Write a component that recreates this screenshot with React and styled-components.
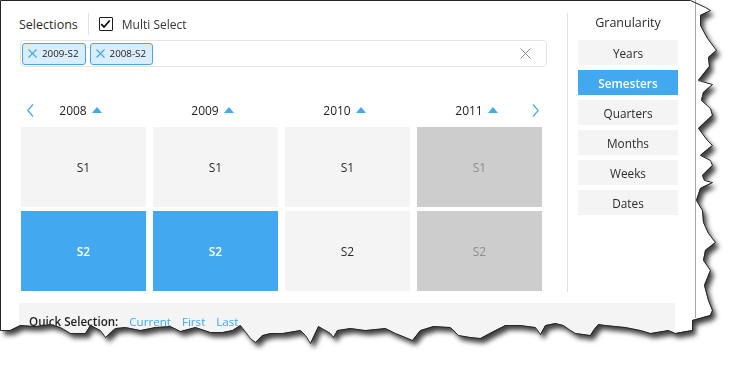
import React from "react";
import styled, { createGlobalStyle } from "styled-components";

const BLUE = "#42a8f0";

const EDGE = [
  [0, 0], [690, 0], [705, 7], [710, 10], [700, 15], [700, 25], [707, 38], [716, 50], [708, 57], [709, 66],
  [698, 80], [712, 84], [703, 92], [701, 100], [710, 108], [712, 115], [698, 128], [707, 140], [712, 145],
  [700, 155], [710, 160], [712, 165], [702, 175], [704, 180], [712, 182], [700, 188], [696, 200], [702, 210],
  [703, 222], [708, 233], [715, 242], [705, 250], [703, 260], [710, 270], [704, 285], [708, 300], [712, 310],
  [710, 315], [692, 320], [692, 330], [675, 333], [668, 330], [650, 333], [640, 330], [625, 327], [605, 325],
  [598, 324], [593, 330], [590, 335], [583, 334], [575, 333], [570, 330], [563, 325], [555, 323], [545, 325],
  [540, 334], [535, 327], [520, 325], [505, 325], [495, 330], [480, 338], [470, 337], [458, 335], [450, 327],
  [433, 326], [420, 330], [412, 340], [405, 337], [395, 333], [385, 328], [365, 330], [350, 328], [337, 330],
  [333, 337], [330, 333], [318, 326], [310, 343], [305, 335], [300, 330], [282, 333], [270, 333], [262, 335],
  [255, 342], [250, 338], [240, 325], [232, 330], [222, 332], [210, 332], [195, 327], [180, 331], [170, 326],
  [155, 327], [140, 330], [125, 327], [115, 328], [105, 337], [100, 330], [90, 325], [85, 333], [70, 333],
  [60, 327], [50, 324], [35, 326], [20, 325], [10, 330], [0, 330],
];
const CLIP = `polygon(${EDGE.map(([x, y]) => `${x}px ${y}px`).join(", ")})`;
const SVG_POINTS = EDGE.map(([x, y]) => `${x + 0.5},${y + 0.5}`).join(" ");

const Global = createGlobalStyle`
  html, body { margin: 0; padding: 0; background: #fff; }
  body { font-family: "Open Sans", "Noto Sans", sans-serif; }
  * { box-sizing: border-box; }
`;

const Stage = styled.div`
  position: relative;
  width: 738px;
  height: 366px;
  overflow: hidden;
  background: #fff;
`;

const Shadowed = styled.div`
  width: 738px;
  height: 366px;
  filter: drop-shadow(4px 5px 2.5px rgba(0, 0, 0, 0.75));
`;

const Paper = styled.div`
  width: 738px;
  height: 366px;
  background: #fff;
  clip-path: ${CLIP};
  display: flex;
  flex-direction: column;
  padding: 13px 0 0 20px;
  color: #2b2b2b;
  font-family: "Open Sans", "Noto Sans", sans-serif;
`;

const EdgeOverlay = styled.svg`
  position: absolute;
  left: 0;
  top: 0;
  pointer-events: none;
`;

const Main = styled.div`
  display: flex;
  height: 279px;
`;

const LeftCol = styled.div`
  width: 527px;
  display: flex;
  flex-direction: column;
`;

const VSep = styled.div`
  width: 1px;
  margin-left: 20px;
  background: #e2e2e2;
`;

const RightCol = styled.div`
  width: 100px;
  margin-left: 10px;
  display: flex;
  flex-direction: column;
`;

const Header = styled.div`
  height: 22px;
  display: flex;
  align-items: center;
`;

const Title = styled.span`
  font-size: 12.5px;
  color: #2b2b2b;
  margin-left: -1px;
`;

const Divider = styled.div`
  width: 1px;
  height: 22px;
  background: #e2e2e2;
  margin-left: 10px;
`;

const CheckBox = styled.span`
  width: 14px;
  height: 14px;
  margin-left: 10px;
  border: 1.5px solid #1e1e1e;
  border-radius: 1px;
  display: flex;
  align-items: center;
  justify-content: center;
  background: #fff;
`;

const CheckLabel = styled.span`
  margin-left: 9px;
  font-size: 12px;
  color: #333;
`;

const TagBox = styled.div`
  margin-top: 5px;
  height: 27px;
  border: 1px solid #e4e4e4;
  border-radius: 4px;
  padding: 0 15px 0 1px;
  display: flex;
  align-items: center;
  gap: 4px;
`;

const Tag = styled.span`
  height: 22px;
  display: flex;
  align-items: center;
  gap: 5px;
  padding: 0 6px 0 5px;
  background: #d9edfc;
  border: 1px solid ${BLUE};
  border-radius: 3px;
  font-size: 9.8px;
  color: #222;
`;

const Spacer = styled.div`
  flex: 1;
`;

const NavRow = styled.div`
  margin-top: 33px;
  margin-left: 1px;
  height: 20px;
  display: grid;
  grid-template-columns: repeat(4, 125px);
  column-gap: 7px;
`;

const YearHead = styled.div`
  display: grid;
  grid-template-columns: 20px 1fr 20px;
  align-items: center;
`;

const ArrowSlot = styled.div`
  display: flex;
  align-items: center;
  justify-content: ${(p) => (p.$end ? "flex-end" : "flex-start")};
  padding: ${(p) => (p.$end ? "0 3px 0 0" : "0 0 0 6px")};
`;

const YearLabel = styled.div`
  display: flex;
  align-items: center;
  justify-content: center;
  padding-right: 6px;
  gap: 5px;
  font-size: 12px;
  color: #222;
`;

const Grid = styled.div`
  margin-top: 7px;
  margin-left: 1px;
  display: grid;
  grid-template-columns: repeat(4, 125px);
  grid-auto-rows: 80px;
  column-gap: 7px;
  row-gap: 4px;
`;

const Cell = styled.div`
  display: flex;
  align-items: center;
  justify-content: center;
  font-size: 12px;
  background: ${(p) => (p.$state === "sel" ? BLUE : p.$state === "off" ? "#cdcdcd" : "#f4f4f4")};
  color: ${(p) => (p.$state === "sel" ? "#fff" : p.$state === "off" ? "#8d8d8d" : "#2b2b2b")};
  font-weight: ${(p) => (p.$state === "sel" ? 600 : 400)};
`;

const GranTitle = styled.div`
  height: 19px;
  margin-bottom: 8px;
  display: flex;
  align-items: center;
  justify-content: center;
  font-size: 12.5px;
  color: #2b2b2b;
`;

const GranList = styled.div`
  display: flex;
  flex-direction: column;
  gap: 5px;
`;

const GranButton = styled.div`
  height: 25px;
  display: flex;
  align-items: center;
  justify-content: center;
  font-size: 11.8px;
  background: ${(p) => (p.$active ? BLUE : "#f4f4f4")};
  color: ${(p) => (p.$active ? "#fff" : "#2b2b2b")};
  font-weight: ${(p) => (p.$active ? 600 : 400)};
`;

const QuickBar = styled.div`
  margin-top: 11px;
  margin-left: -1px;
  width: 656px;
  height: 44px;
  background: #f4f4f4;
  padding: 10px 10px 0;
  display: flex;
  align-items: flex-start;
  font-size: 11.6px;
  line-height: 18px;
`;

const QuickLabel = styled.span`
  font-weight: 600;
  color: #1e1e1e;
`;

const QuickLink = styled.span`
  color: ${BLUE};
  margin-left: ${(p) => p.$gap || 12}px;
`;

const Chevron = ({ dir }) => (
  <svg width="7" height="13" viewBox="0 0 7 13">
    <path
      d={dir === "left" ? "M6 0.5 L0.8 6.5 L6 12.5" : "M1 0.5 L6.2 6.5 L1 12.5"}
      fill="none"
      stroke={BLUE}
      strokeWidth="1.2"
    />
  </svg>
);

const UpTri = () => (
  <svg width="10" height="6" viewBox="0 0 10 6">
    <polygon points="5,0 10,6 0,6" fill={BLUE} />
  </svg>
);

const Cross = ({ size, color, width }) => (
  <svg width={size} height={size} viewBox={`0 0 ${size} ${size}`}>
    <path
      d={`M0.5 0.5 L${size - 0.5} ${size - 0.5} M${size - 0.5} 0.5 L0.5 ${size - 0.5}`}
      stroke={color}
      strokeWidth={width}
      fill="none"
    />
  </svg>
);

const years = ["2008", "2009", "2010", "2011"];
const s1 = ["", "", "", "off"];
const s2 = ["sel", "sel", "", "off"];
const grans = ["Years", "Semesters", "Quarters", "Months", "Weeks", "Dates"];

export default function App() {
  return (
    <Stage>
      <Global />
      <Shadowed>
        <Paper>
          <Main>
            <LeftCol>
              <Header>
                <Title>Selections</Title>
                <Divider />
                <CheckBox>
                  <svg width="11" height="10" viewBox="0 0 11 10">
                    <path d="M1.2 5.2 L4 8 L9.8 1.5" fill="none" stroke="#111" strokeWidth="1.8" />
                  </svg>
                </CheckBox>
                <CheckLabel>Multi Select</CheckLabel>
              </Header>
              <TagBox>
                <Tag>
                  <Cross size={9} color={BLUE} width={1.1} />
                  2009-S2
                </Tag>
                <Tag>
                  <Cross size={9} color={BLUE} width={1.1} />
                  2008-S2
                </Tag>
                <Spacer />
                <Cross size={11} color="#8a8a8a" width={1} />
              </TagBox>
              <NavRow>
                {years.map((y, i) => (
                  <YearHead key={y}>
                    <ArrowSlot>{i === 0 && <Chevron dir="left" />}</ArrowSlot>
                    <YearLabel>
                      {y}
                      <UpTri />
                    </YearLabel>
                    <ArrowSlot $end>{i === 3 && <Chevron dir="right" />}</ArrowSlot>
                  </YearHead>
                ))}
              </NavRow>
              <Grid>
                {s1.map((s, i) => (
                  <Cell key={"a" + i} $state={s}>S1</Cell>
                ))}
                {s2.map((s, i) => (
                  <Cell key={"b" + i} $state={s}>S2</Cell>
                ))}
              </Grid>
            </LeftCol>
            <VSep />
            <RightCol>
              <GranTitle>Granularity</GranTitle>
              <GranList>
                {grans.map((g) => (
                  <GranButton key={g} $active={g === "Semesters"}>{g}</GranButton>
                ))}
              </GranList>
            </RightCol>
          </Main>
          <QuickBar>
            <QuickLabel>Quick Selection:</QuickLabel>
            <QuickLink $gap={11}>Current</QuickLink>
            <QuickLink $gap={11}>First</QuickLink>
            <QuickLink $gap={11}>Last</QuickLink>
          </QuickBar>
        </Paper>
      </Shadowed>
      <EdgeOverlay width="738" height="366" viewBox="0 0 738 366">
        <line x1="695.5" y1="0" x2="695.5" y2="318" stroke="#a8a8a8" strokeWidth="1" />
        <polygon points={SVG_POINTS} fill="none" stroke="#262626" strokeWidth="1" />
      </EdgeOverlay>
    </Stage>
  );
}
